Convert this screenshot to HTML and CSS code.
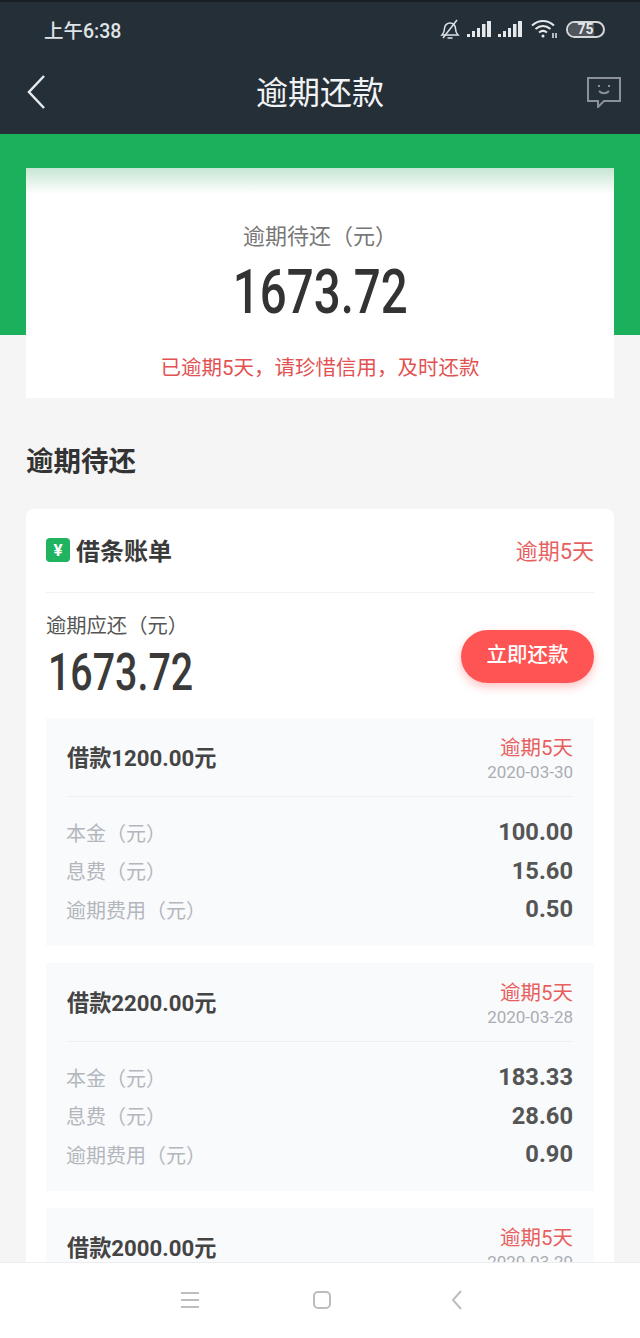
FILE: index.html
```html
<!DOCTYPE html>
<html lang="zh-CN">
<head>
  <meta charset="UTF-8">
  <meta name="viewport" content="width=device-width, initial-scale=1.0">
  <title>逾期还款</title>
  <link rel="stylesheet" href="styles.css">
</head>
<body>
  <div class="phone">
    <header class="topbar">
      <div class="statusbar">
        <span class="time">上午6:38</span>
        <div class="status-icons">
          <svg width="22" height="22" viewBox="0 0 22 22" fill="none" stroke="#dfe3e6" stroke-width="1.5"><path d="M3 17c1.500-1.500 2.500-3 2.500-6.500 0-3 2.500-5.500 5.500-5.500s5.500 2.500 5.500 5.500c0 3.500 1 5 2.500 6.500z"/><path d="M8.500 20h5"/><path d="M18 2L4 20"/></svg>
          <svg width="26" height="18" viewBox="0 0 26 18" fill="#e6e9eb"><rect x="1" y="14" width="3" height="3"/><rect x="6" y="11" width="3" height="6"/><rect x="11" y="8" width="3" height="9"/><rect x="16" y="4" width="3.500" height="13"/><rect x="21" y="1" width="4" height="16"/></svg>
          <svg width="26" height="18" viewBox="0 0 26 18" fill="#e6e9eb"><rect x="1" y="14" width="3" height="3"/><rect x="6" y="11" width="3" height="6"/><rect x="11" y="8" width="3" height="9"/><rect x="16" y="4" width="3.500" height="13"/><rect x="21" y="1" width="4" height="16"/></svg>
          <svg class="wifi" width="27" height="20" viewBox="0 0 27 20" fill="none" stroke="#e6e9eb" stroke-width="2"><path d="M1 6.500c6.500-6 15.500-6 22 0"/><path d="M4.500 10c4.500-4 10.500-4 15 0"/><path d="M8 13.500c2.500-2 5.500-2 8 0"/><circle cx="12" cy="17" r="1.500" fill="#e6e9eb" stroke="none"/><path d="M22 14v5M25 14v5" stroke-width="1.500"/></svg>
          <div class="battery"><div class="battery-fill"></div><span>75</span></div>
        </div>
      </div>
      <div class="navbar">
        <svg class="nav-back" width="20" height="36" viewBox="0 0 20 36" fill="none" stroke="#e8ebed" stroke-width="2.500"><path d="M18 2L3 18l15 16"/></svg>
        <h1>逾期还款</h1>
        <svg class="nav-chat" width="36" height="32" viewBox="0 0 36 32" fill="none" stroke="#8b9196" stroke-width="2"><path d="M2 2h32v23H18l-6 6v-6H2z"/><path d="M13 9v2M23 9v2"/><path d="M13 15c3 3 7 3 10 0"/></svg>
      </div>
    </header>

    <main class="content">
      <section class="summary">
        <div class="summary-label">逾期待还（元）</div>
        <div class="summary-amount"><span>1673.72</span></div>
        <div class="summary-note">已逾期5天，请珍惜信用，及时还款</div>
      </section>

      <h2 class="section-title">逾期待还</h2>

      <section class="bill">
        <div class="bill-head">
          <div class="bill-name">
            <span class="yen-icon">¥</span>
            <span>借条账单</span>
          </div>
          <span class="overdue-days">逾期5天</span>
        </div>

        <div class="bill-due">
          <div>
            <div class="due-label">逾期应还（元）</div>
            <div class="due-amount"><span>1673.72</span></div>
          </div>
          <div class="pay-btn">立即还款</div>
        </div>

        <div class="loan">
          <div class="loan-head">
            <div class="loan-title">借款1200.00元</div>
            <div class="loan-meta">
              <div class="loan-overdue">逾期5天</div>
              <div class="loan-date">2020-03-30</div>
            </div>
          </div>
          <div class="loan-rows">
            <div class="loan-row"><span>本金（元）</span><b>100.00</b></div>
            <div class="loan-row"><span>息费（元）</span><b>15.60</b></div>
            <div class="loan-row"><span>逾期费用（元）</span><b>0.50</b></div>
          </div>
        </div>

        <div class="loan">
          <div class="loan-head">
            <div class="loan-title">借款2200.00元</div>
            <div class="loan-meta">
              <div class="loan-overdue">逾期5天</div>
              <div class="loan-date">2020-03-28</div>
            </div>
          </div>
          <div class="loan-rows">
            <div class="loan-row"><span>本金（元）</span><b>183.33</b></div>
            <div class="loan-row"><span>息费（元）</span><b>28.60</b></div>
            <div class="loan-row"><span>逾期费用（元）</span><b>0.90</b></div>
          </div>
        </div>

        <div class="loan">
          <div class="loan-head">
            <div class="loan-title">借款2000.00元</div>
            <div class="loan-meta">
              <div class="loan-overdue">逾期5天</div>
              <div class="loan-date">2020-03-29</div>
            </div>
          </div>
        </div>
      </section>
    </main>

    <footer class="softkeys">
      <svg width="20" height="18" viewBox="0 0 20 18" fill="none" stroke="#bdbdbd" stroke-width="2"><path d="M1 2h18M1 9h18M1 16h18"/></svg>
      <svg class="key-home" width="18" height="18" viewBox="0 0 18 18" fill="none" stroke="#bdbdbd" stroke-width="2"><rect x="1" y="1" width="16" height="16" rx="4"/></svg>
      <svg width="12" height="20" viewBox="0 0 12 20" fill="none" stroke="#bdbdbd" stroke-width="2"><path d="M10 1L2 10l8 9"/></svg>
    </footer>
  </div>
</body>
</html>
```

FILE: styles.css
```css
* {
  box-sizing: border-box;
}

body {
  margin: 0;
  font-family: "Roboto", "Noto Sans CJK SC", sans-serif;
  background-color: #f5f5f5;
}

.phone {
  width: 640px;
  height: 1338px;
  display: flex;
  flex-direction: column;
  overflow: hidden;
}

/* top bar */
.topbar {
  height: 134px;
  flex: none;
  background-color: #252f38;
  border-top: 2px solid #1a1f24;
  color: #fff;
}

.statusbar {
  height: 56px;
  padding: 0 35px 2px 44px;
  display: flex;
  align-items: center;
  justify-content: space-between;
}

.time {
  font-size: 19.5px;
  font-weight: 500;
  color: #dfe3e6;
}

.status-icons {
  display: flex;
  align-items: center;
  gap: 5px;
}

.wifi {
  margin-left: 3px;
}

.battery {
  width: 39px;
  height: 17px;
  margin-left: 3px;
  border: 2px solid #d5d8da;
  border-radius: 9px;
  background-color: #252f38;
  overflow: hidden;
  display: flex;
  align-items: center;
  justify-content: center;
  position: relative;
  font-size: 14px;
  font-weight: 700;
  color: #e6e9eb;
}

.battery-fill {
  position: absolute;
  top: 0;
  bottom: 0;
  left: 0;
  width: 75%;
  background-color: #50565c;
}

.battery span {
  position: relative;
}

.navbar {
  height: 72px;
  padding: 0 18px 5px 26px;
  display: flex;
  align-items: center;
  justify-content: space-between;
}

.navbar h1 {
  margin: 0 0 3px 8px;
  font-size: 32px;
  font-weight: 400;
  color: #f2f3f4;
}

/* page */
.content {
  flex: 1;
  min-height: 0;
  overflow: hidden;
  padding: 34px 26px 0;
  background: linear-gradient(#1bb05c 0, #1bb05c 201px, #f5f5f5 201px);
}

.summary {
  height: 230px;
  padding-top: 54px;
  background: linear-gradient(#c5e6d2 0, #ffffff 26px);
  text-align: center;
}

.summary-label {
  font-size: 22px;
  line-height: 30px;
  color: #777;
}

.summary-amount {
  margin-top: 8px;
  height: 64px;
  font-size: 62px;
  line-height: 64px;
  font-weight: 500;
  color: #333;
}

.summary-amount span {
  display: inline-block;
  transform: scaleX(0.765);
}

.summary-note {
  margin-top: 30px;
  font-size: 20.5px;
  line-height: 28px;
  color: #e25252;
}

.section-title {
  margin: 46px 0 29px;
  font-size: 27.5px;
  line-height: 36px;
  font-weight: 700;
  color: #333;
}

.bill {
  padding: 0 20px;
  background-color: #fff;
  border-radius: 8px 8px 0 0;
}

.bill-head {
  height: 84px;
  padding-bottom: 2px;
  display: flex;
  align-items: center;
  justify-content: space-between;
  border-bottom: 1px solid #f2f2f2;
}

.bill-name {
  display: flex;
  align-items: center;
  gap: 6px;
  font-size: 24px;
  font-weight: 700;
  color: #3a3a3a;
}

.yen-icon {
  width: 24px;
  height: 24px;
  border-radius: 4px;
  background-color: #1fb45f;
  color: #fff;
  font-size: 17px;
  font-weight: 700;
  line-height: 24px;
  text-align: center;
}

.overdue-days {
  margin-bottom: 2px;
  font-size: 22px;
  color: #e85f5f;
}

.bill-due {
  height: 125px;
  display: flex;
  align-items: center;
  justify-content: space-between;
}

.due-label {
  font-size: 20.3px;
  line-height: 28px;
  color: #555;
}

.due-amount {
  height: 54px;
  margin-top: 6px;
  padding-left: 2px;
  font-size: 52px;
  line-height: 54px;
  font-weight: 500;
  color: #3a3a3a;
}

.due-amount span {
  display: inline-block;
  transform: scaleX(0.757);
  transform-origin: left center;
}

.pay-btn {
  width: 133px;
  height: 53px;
  margin-top: 1px;
  border-radius: 27px;
  background-color: #ff5454;
  box-shadow: 0 4px 10px rgba(255, 84, 84, 0.35);
  color: #fff;
  font-size: 20.5px;
  font-weight: 500;
  line-height: 50px;
  text-align: center;
}

.loan {
  height: 228px;
  margin-bottom: 17px;
  padding: 0 21px;
  background-color: #f9fafc;
}

.loan-head {
  height: 79px;
  display: flex;
  align-items: center;
  justify-content: space-between;
  border-bottom: 1px solid #eeeff1;
}

.loan-title {
  padding-bottom: 3px;
  font-size: 22.2px;
  font-weight: 700;
  color: #444;
}

.loan-meta {
  margin-top: 3px;
  text-align: right;
}

.loan-overdue {
  font-size: 20.5px;
  line-height: 26px;
  color: #e85f5f;
}

.loan-date {
  font-size: 17px;
  line-height: 22px;
  color: #a9adb3;
}

.loan-rows {
  margin-left: -1px;
  padding-top: 16px;
}

.loan-row {
  height: 38.5px;
  display: flex;
  align-items: center;
  justify-content: space-between;
  font-size: 20px;
  color: #b3b7bd;
}

.loan-row b {
  font-size: 23.7px;
  font-weight: 700;
  color: #555;
}

/* soft keys */
.softkeys {
  height: 76px;
  flex: none;
  padding: 0 177px 2px 180px;
  background-color: #fff;
  border-top: 1px solid #eee;
  display: flex;
  align-items: center;
  justify-content: space-between;
}

.key-home {
  margin-right: 8px;
}
```
